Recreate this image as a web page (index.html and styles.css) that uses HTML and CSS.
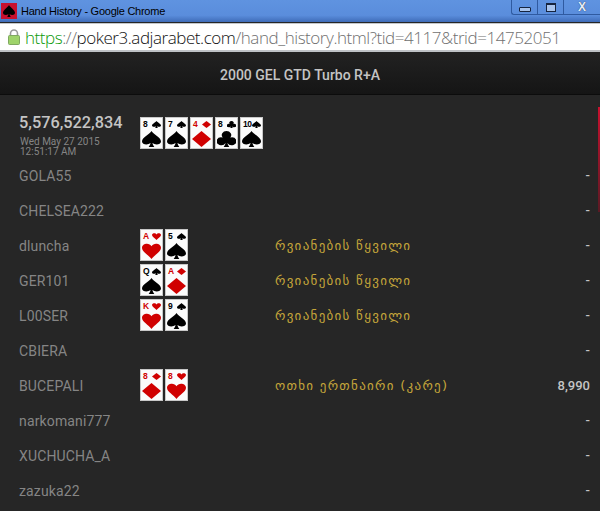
FILE: index.html
```html
<!DOCTYPE html>
<html lang="en">
<head>
    <meta charset="UTF-8">
    <title>Hand History - Google Chrome</title>
    <link rel="stylesheet" href="styles.css">
</head>
<body>
    <svg class="defs" width="0" height="0">
        <symbol id="spade" viewBox="0 0 20 20" preserveAspectRatio="none"><path d="M10 0C8 4 0 8 0 13c0 4 6 5 9 2-.2 2-1 3-2 5h6c-1-2-1.800-3-2-5 3 3 9 2 9-2 0-5-8-9-10-13z"/></symbol>
        <symbol id="club" viewBox="0 0 20 20" preserveAspectRatio="none"><path d="M10 0a5 5 0 0 0-4 8 5 5 0 1 0 3 7c-.2 2-1 3-2 5h6c-1-2-1.800-3-2-5a5 5 0 1 0 3-7 5 5 0 0 0-4-8z"/></symbol>
        <symbol id="heart" viewBox="0 0 20 20" preserveAspectRatio="none"><path d="M10 20C7 15 0 11 0 6c0-6 8-7 10-2 2-5 10-4 10 2 0 5-7 9-10 14z"/></symbol>
        <symbol id="diamond" viewBox="0 0 20 20" preserveAspectRatio="none"><path d="M10 0l10 10-10 10L0 10z"/></symbol>
    </svg>

    <div class="titlebar">
        <svg class="favicon" viewBox="0 0 16 16"><rect width="16" height="16" fill="#c8102e"/><use href="#spade" x="2" y="2" width="12" height="12"/></svg>
        <span class="title">Hand History - Google Chrome</span>
        <div class="winbtns">
            <div class="winbtn min"><span></span></div>
            <div class="winbtn max"><span></span></div>
            <div class="winbtn close">X</div>
        </div>
    </div>

    <div class="addressbar">
        <svg class="lock" viewBox="0 0 12 16"><path d="M2.500 7V4.500a3.500 3.500 0 0 1 7 0V7" fill="none" stroke="#9a9a9a" stroke-width="1.600"/><rect x="0.500" y="6.500" width="11" height="9" rx="1" fill="#9ed36a" stroke="#7fa860"/></svg>
        <span class="url"><span class="scheme">https</span><span class="dim">://</span><span class="host">poker3.adjarabet.com</span><span class="dim">/hand_history.html?tid=4117&amp;trid=14752051</span></span>
    </div>

    <div class="header">2000 GEL GTD Turbo R+A</div>

    <div class="content">
        <div class="hand">
            <div class="info">
                <div class="handid">5,576,522,834</div>
                <div class="date">Wed May 27 2015<br>12:51:17 AM</div>
            </div>
            <div class="cards">
                <div class="card"><span class="rank">8</span><svg class="pip"><use href="#spade"/></svg><svg class="suit"><use href="#spade"/></svg></div>
                <div class="card"><span class="rank">7</span><svg class="pip"><use href="#spade"/></svg><svg class="suit"><use href="#spade"/></svg></div>
                <div class="card red"><span class="rank">4</span><svg class="pip"><use href="#diamond"/></svg><svg class="suit"><use href="#diamond"/></svg></div>
                <div class="card"><span class="rank">8</span><svg class="pip"><use href="#club"/></svg><svg class="suit"><use href="#club"/></svg></div>
                <div class="card"><span class="rank">10</span><svg class="pip"><use href="#spade"/></svg><svg class="suit"><use href="#spade"/></svg></div>
            </div>
        </div>

        <div class="row"><div class="name">GOLA55</div><div class="cards"></div><div class="result"></div><div class="win">-</div></div>
        <div class="row"><div class="name">CHELSEA222</div><div class="cards"></div><div class="result"></div><div class="win">-</div></div>
        <div class="row">
            <div class="name">dluncha</div>
            <div class="cards">
                <div class="card red"><span class="rank">A</span><svg class="pip"><use href="#heart"/></svg><svg class="suit"><use href="#heart"/></svg></div>
                <div class="card"><span class="rank">5</span><svg class="pip"><use href="#spade"/></svg><svg class="suit"><use href="#spade"/></svg></div>
            </div>
            <div class="result">რვიანების წყვილი</div>
            <div class="win">-</div>
        </div>
        <div class="row">
            <div class="name">GER101</div>
            <div class="cards">
                <div class="card"><span class="rank">Q</span><svg class="pip"><use href="#spade"/></svg><svg class="suit"><use href="#spade"/></svg></div>
                <div class="card red"><span class="rank">A</span><svg class="pip"><use href="#diamond"/></svg><svg class="suit"><use href="#diamond"/></svg></div>
            </div>
            <div class="result">რვიანების წყვილი</div>
            <div class="win">-</div>
        </div>
        <div class="row">
            <div class="name">L00SER</div>
            <div class="cards">
                <div class="card red"><span class="rank">K</span><svg class="pip"><use href="#heart"/></svg><svg class="suit"><use href="#heart"/></svg></div>
                <div class="card"><span class="rank">9</span><svg class="pip"><use href="#spade"/></svg><svg class="suit"><use href="#spade"/></svg></div>
            </div>
            <div class="result">რვიანების წყვილი</div>
            <div class="win">-</div>
        </div>
        <div class="row"><div class="name">CBIERA</div><div class="cards"></div><div class="result"></div><div class="win">-</div></div>
        <div class="row">
            <div class="name">BUCEPALI</div>
            <div class="cards">
                <div class="card red"><span class="rank">8</span><svg class="pip"><use href="#diamond"/></svg><svg class="suit"><use href="#diamond"/></svg></div>
                <div class="card red"><span class="rank">8</span><svg class="pip"><use href="#heart"/></svg><svg class="suit"><use href="#heart"/></svg></div>
            </div>
            <div class="result">ოთხი ერთნაირი (კარე)</div>
            <div class="win">8,990</div>
        </div>
        <div class="row"><div class="name">narkomani777</div><div class="cards"></div><div class="result"></div><div class="win">-</div></div>
        <div class="row"><div class="name">XUCHUCHA_A</div><div class="cards"></div><div class="result"></div><div class="win">-</div></div>
        <div class="row"><div class="name">zazuka22</div><div class="cards"></div><div class="result"></div><div class="win">-</div></div>

        <div class="scrollthumb"></div>
    </div>
</body>
</html>
```

FILE: styles.css
```css
html, body {
    margin: 0;
    padding: 0;
    height: 511px;
    overflow: hidden;
}
body {
    font-family: Roboto, "DejaVu Sans", sans-serif;
    background: #262626;
}
.defs { position: absolute; }

/* window chrome */
.titlebar {
    height: 22px;
    display: flex;
    align-items: center;
    background: linear-gradient(#5f93e0, #5a8ddc 70%, #3f6cb8);
    color: #000;
    font-family: "Liberation Sans", sans-serif;
    font-size: 11px;
    letter-spacing: -0.250px;
}
.favicon { width: 16px; height: 16px; margin: 0 4px 0 1px; }
.title { flex: 1; }
.winbtns {
    display: flex;
    align-self: flex-start;
    height: 14px;
    border: 1px solid #2f5aa0;
    border-top: none;
    border-right: none;
    border-radius: 0 0 0 3px;
}
.winbtn {
    display: flex;
    align-items: center;
    justify-content: center;
    width: 25px;
    border-right: 1px solid #2f5aa0;
}
.winbtn.close { width: 36px; border-right: none; font-size: 12px; font-weight: bold; color: #e4ecf8; text-shadow: 0 0 1px #16243e; }
.min span { width: 10px; height: 3px; margin-top: 5px; background: #a9c4ec; border: 1px solid #16243e; border-radius: 1px; }
.max span { width: 8px; height: 6px; background: #a9c4ec; border: 1px solid #16243e; border-top-width: 2px; }
.addressbar {
    box-sizing: border-box;
    height: 29px;
    margin-top: 1px;
    display: flex;
    align-items: center;
    background: #fff;
    border-top: 1px solid #c3c7cc;
    border-bottom: 2px solid #bfc2c6;
}
.lock { flex-shrink: 0; width: 12px; height: 16px; margin: 0 5px 0 8px; }
.url {
    font-family: "Open Sans", sans-serif;
    font-size: 17px;
    font-weight: 300;
    letter-spacing: -0.450px;
    white-space: nowrap;
}
.scheme { color: #0a9a0a; }
.dim { color: #707070; }
.host { color: #111; }

/* page */
.header {
    height: 40px;
    padding-top: 2px;
    line-height: 42px;
    text-align: center;
    color: #c4c4c4;
    font-size: 14px;
    font-weight: 500;
    background: linear-gradient(#222, #151515);
    border-bottom: 1px solid #0c0c0c;
}
.content {
    position: relative;
    padding-top: 20px;
    padding-right: 10px;
    padding-left: 19px;
}
.scrollthumb {
    position: absolute;
    top: 12px;
    right: 0;
    width: 2px;
    height: 105px;
    background: linear-gradient(#c8102e, #5a1a24);
}
.hand {
    display: flex;
    height: 43px;
}
.hand .cards { margin: 2px 0 0 1px; }
.info { width: 120px; }
.handid {
    color: #c4c4c4;
    font-size: 16.300px;
    font-weight: 500;
    line-height: 16px;
}
.date {
    color: #858585;
    font-size: 10px;
    line-height: 10px;
    margin: 6px 0 0 1px;
}
.row {
    display: flex;
    align-items: center;
    height: 35px;
    font-size: 14px;
    color: #858585;
}
.name { width: 121px; letter-spacing: 0.150px; }
.row .cards { width: 135px; margin-top: -2px; }
.result {
    flex: 1;
    color: #c4a53a;
    font-family: "DejaVu Sans", sans-serif;
    font-size: 13px;
    letter-spacing: 1.300px;
}
.win {
    color: #c4c4c4;
    font-size: 13px;
    font-weight: 500;
}

/* cards */
.cards {
    display: flex;
    gap: 2px;
}
.card {
    position: relative;
    box-sizing: border-box;
    width: 23px;
    height: 32px;
    background: #fbfbfb;
    border: 1px solid #c8c8c8;
    color: #000;
    fill: #000;
}
.card.red { color: #d00000; fill: #d00000; }
.rank {
    position: absolute;
    top: 2px;
    left: 2px;
    font-family: "Liberation Sans", sans-serif;
    font-size: 8.500px;
    font-weight: bold;
    line-height: 9px;
    letter-spacing: -0.500px;
}
.pip {
    position: absolute;
    top: 3px;
    right: 1px;
    width: 9px;
    height: 7px;
}
.suit {
    position: absolute;
    top: 13px;
    left: 1px;
    width: 19px;
    height: 16px;
}
```
